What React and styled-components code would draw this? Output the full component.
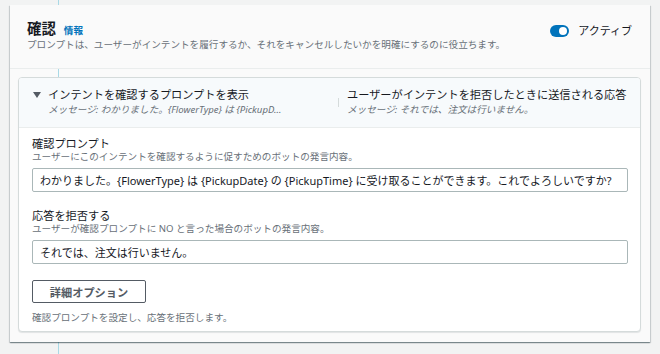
import React from "react";
import styled, { createGlobalStyle } from "styled-components";

const GlobalStyle = createGlobalStyle`
body {
  margin: 0;
  background-color: #f2f3f3;
  font-family: "Noto Sans", "Noto Sans CJK JP", sans-serif;
  color: #16191f;
}
`;

const Page = styled.div`
  position: relative;
  height: 354px;
  box-sizing: border-box;
  padding: 5px 10px 0 10px;
  overflow: hidden;
`;

const GuideLine = styled.div`
  position: absolute;
  left: 58px;
  top: 0;
  bottom: 0;
  width: 1px;
  background: #a9d9e6;
  z-index: 0;
`;

const Panel = styled.section`
  position: relative;
  z-index: 1;
  height: 337px;
  box-sizing: border-box;
  background: #fafafa;
  box-shadow: 0 1px 1px 0 rgba(0, 28, 36, 0.35), 1px 1px 1px 0 rgba(0, 28, 36, 0.12),
    -1px 1px 1px 0 rgba(0, 28, 36, 0.12);
`;

const PanelHeader = styled.header`
  display: flex;
  justify-content: space-between;
  align-items: flex-start;
  padding: 15px 18px 16px 17px;
  border-bottom: 1px solid #eaeded;
`;

const TitleRow = styled.div`
  display: flex;
  align-items: baseline;
  gap: 8px;
  height: 18px;
`;

const Title = styled.h2`
  margin: 0;
  font-size: 14.4px;
  line-height: 18px;
  font-weight: 700;
`;

const InfoLink = styled.a`
  font-size: 9.6px;
  font-weight: 700;
  color: #0073bb;
  text-decoration: none;
`;

const Description = styled.p`
  margin: 0;
  font-size: 9.6px;
  line-height: ${(p) => p.lh || 14}px;
  color: #687078;
`;

const ToggleWrap = styled.label`
  display: flex;
  align-items: center;
  gap: 9px;
  margin-top: 3px;
  font-size: 11px;
  line-height: 16px;
`;

const Track = styled.span`
  position: relative;
  width: 19px;
  height: 12px;
  border-radius: 6px;
  background: ${(p) => (p.on ? "#0073bb" : "#aab7b8")};
`;

const Knob = styled.span`
  position: absolute;
  top: 2px;
  left: ${(p) => (p.on ? "9px" : "2px")};
  width: 8px;
  height: 8px;
  border-radius: 50%;
  background: #fff;
`;

const PanelBody = styled.div`
  padding: 0 9px 0 8px;
`;

const Connector = styled.div`
  width: 1px;
  height: 8px;
  margin-left: 40px;
  background: #a9d9e6;
`;

const Card = styled.div`
  height: 255px;
  box-sizing: border-box;
  border: 1px solid #d5dbdb;
  border-radius: 4px;
  background: #fff;
  overflow: hidden;
  box-shadow: 0 1px 1px 0 rgba(0, 28, 36, 0.1);
`;

const CardHeader = styled.div`
  display: flex;
  padding: 9px 12px 10px 14px;
  background: #f7fafc;
  border-bottom: 1px solid #eaeded;
`;

const Column = styled.div`
  display: flex;
  gap: 7px;
  width: ${(p) => p.w || "auto"};
  flex: ${(p) => (p.grow ? 1 : "none")};
`;

const Arrow = styled.span`
  margin-top: 5px;
  width: 0;
  height: 0;
  border-left: 4px solid transparent;
  border-right: 4px solid transparent;
  border-top: 6px solid #545b64;
`;

const ColText = styled.div`
  display: flex;
  flex-direction: column;
`;

const ColTitle = styled.span`
  font-size: 11.2px;
  line-height: 16px;
  white-space: nowrap;
`;

const ColSub = styled.span`
  font-size: 9.6px;
  line-height: 14px;
  font-style: italic;
  color: #687078;
  white-space: nowrap;
`;

const Separator = styled.span`
  align-self: center;
  width: 1px;
  height: 9px;
  margin: 0 8px 0 0;
  background: #d5dbdb;
`;

const CardBody = styled.div`
  padding: 9px 12px 0 13px;
`;

const Field = styled.div`
  margin-bottom: ${(p) => p.mb || 0}px;
`;

const Label = styled.div`
  font-size: 11.2px;
  line-height: 14px;
`;

const Input = styled.input`
  display: block;
  width: 100%;
  height: 24px;
  box-sizing: border-box;
  margin-top: 5px;
  padding: 0 7px;
  border: 1px solid #aab7b8;
  border-radius: 2px;
  background: #fff;
  font-family: inherit;
  font-size: 11px;
  color: #16191f;
  outline: none;
`;

const Button = styled.button`
  display: block;
  width: 114px;
  height: 23px;
  padding: 0;
  border: 1px solid #545b64;
  border-radius: 2px;
  background: #fff;
  font-family: inherit;
  font-size: 11.2px;
  font-weight: 700;
  color: #545b64;
`;

const Footer = styled(Description)`
  margin-top: 9px;
`;

export default function App() {
  return (
    <Page>
      <GlobalStyle />
      <GuideLine />
      <Panel>
        <PanelHeader>
          <div>
            <TitleRow>
              <Title>確認</Title>
              <InfoLink href="#">情報</InfoLink>
            </TitleRow>
            <Description>
              プロンプトは、ユーザーがインテントを履行するか、それをキャンセルしたいかを明確にするのに役立ちます。
            </Description>
          </div>
          <ToggleWrap>
            <Track on>
              <Knob on />
            </Track>
            アクティブ
          </ToggleWrap>
        </PanelHeader>
        <PanelBody>
          <Connector />
          <Card>
            <CardHeader>
              <Column w="305px">
                <Arrow />
                <ColText>
                  <ColTitle>インテントを確認するプロンプトを表示</ColTitle>
                  <ColSub>メッセージ: わかりました。{"{FlowerType}"} は {"{PickupD…"}</ColSub>
                </ColText>
              </Column>
              <Separator />
              <Column grow>
                <ColText>
                  <ColTitle>ユーザーがインテントを拒否したときに送信される応答</ColTitle>
                  <ColSub>メッセージ: それでは、注文は行いません。</ColSub>
                </ColText>
              </Column>
            </CardHeader>
            <CardBody>
              <Field mb={17}>
                <Label>確認プロンプト</Label>
                <Description lh={12}>
                  ユーザーにこのインテントを確認するように促すためのボットの発言内容。
                </Description>
                <Input
                  readOnly
                  value="わかりました。{FlowerType} は {PickupDate} の {PickupTime} に受け取ることができます。これでよろしいですか?"
                />
              </Field>
              <Field mb={16}>
                <Label>応答を拒否する</Label>
                <Description lh={12}>
                  ユーザーが確認プロンプトに NO と言った場合のボットの発言内容。
                </Description>
                <Input readOnly value="それでは、注文は行いません。" />
              </Field>
              <Button>詳細オプション</Button>
              <Footer lh={12}>確認プロンプトを設定し、応答を拒否します。</Footer>
            </CardBody>
          </Card>
        </PanelBody>
      </Panel>
    </Page>
  );
}
